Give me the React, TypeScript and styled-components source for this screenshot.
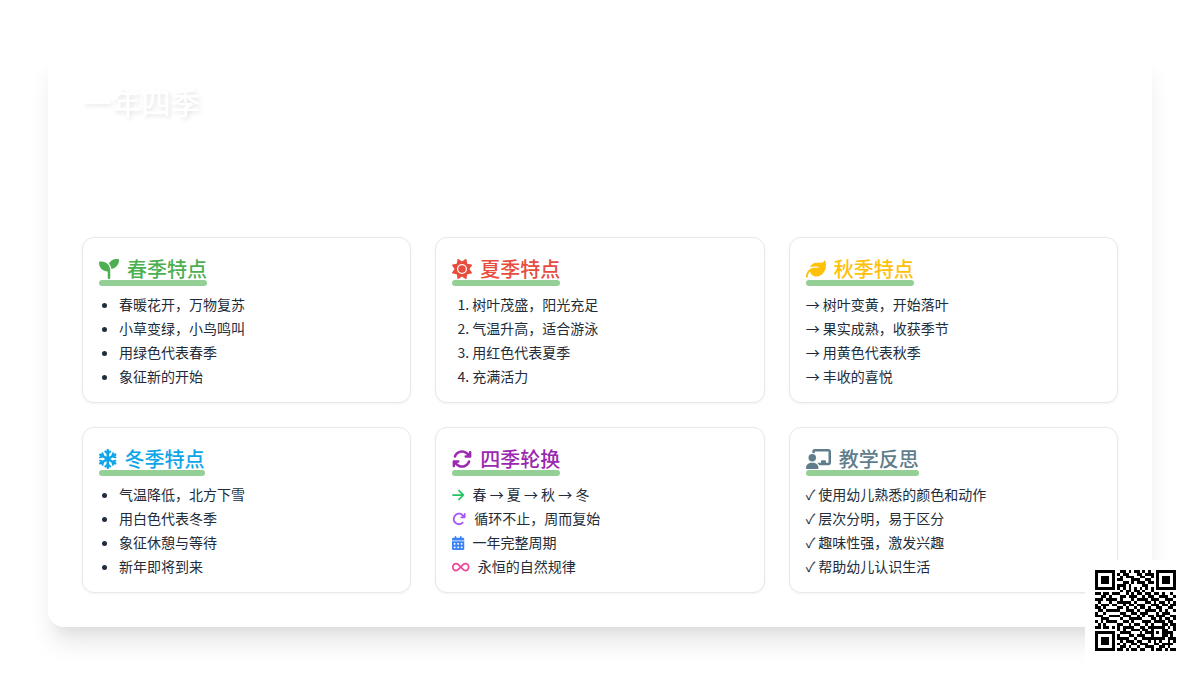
import React from 'react';
import styled, { createGlobalStyle } from 'styled-components';
import {
  FaSeedling,
  FaSun,
  FaLeaf,
  FaSnowflake,
  FaArrowsRotate,
  FaChalkboardUser,
  FaArrowRight,
  FaArrowRotateRight,
  FaCalendarDays,
  FaInfinity
} from 'react-icons/fa6';

const GlobalStyle = createGlobalStyle`
  html, body {
    margin: 0;
    padding: 0;
    background: #fff;
  }
  body {
    width: 1200px;
    height: 675px;
    overflow: hidden;
    font-family: "Noto Sans CJK SC", "Noto Sans", sans-serif;
  }
`;

const Page = styled.div`
  position: relative;
  box-sizing: border-box;
  width: 1200px;
  height: 675px;
  padding: 48px;
`;

const Slide = styled.div`
  box-sizing: border-box;
  height: 579px;
  padding: 34px;
  display: flex;
  flex-direction: column;
  justify-content: space-between;
  background: #fff;
  border-radius: 16px;
  box-shadow: 0 20px 25px -5px rgba(0, 0, 0, 0.1), 0 10px 10px -5px rgba(0, 0, 0, 0.04);
`;

const Title = styled.h1`
  margin: 0;
  font-size: 29.6px;
  line-height: 40px;
  font-weight: 500;
  color: #fff;
  text-shadow: 2px 2px 4px rgba(0, 0, 0, 0.1);
`;

const Grid = styled.div`
  display: grid;
  grid-template-columns: repeat(3, 1fr);
  gap: 24px;
`;

const Card = styled.section`
  box-sizing: border-box;
  height: 166px;
  padding: 16px;
  background: #fff;
  border: 1px solid #e8e8e8;
  border-radius: 12px;
  box-shadow: 0 1px 3px rgba(0, 0, 0, 0.05);
`;

const Heading = styled.h2<{ $color: string; $iconWidth?: number }>`
  position: relative;
  display: inline-flex;
  align-items: center;
  height: 32px;
  box-sizing: border-box;
  padding-bottom: 3px;
  margin: 0 0 6px;
  font-size: 20px;
  line-height: 28px;
  font-weight: 500;
  color: ${(p) => p.$color};
  vertical-align: top;

  svg {
    width: ${(p) => p.$iconWidth || 20}px;
    height: 20px;
    margin-right: 8px;
  }

  &::after {
    content: '';
    position: absolute;
    left: 0;
    right: 0;
    bottom: 0;
    height: 6px;
    border-radius: 3px;
    background: rgba(76, 175, 80, 0.6);
  }
`;

const Bullets = styled.ul`
  margin: 0;
  padding-left: 20px;
  font-size: 14px;
  line-height: 24px;
  color: #222c3a;
`;

const Numbers = styled.ol`
  margin: 0;
  padding-left: 20px;
  font-size: 14px;
  line-height: 24px;
  color: #222c3a;
`;

const Plain = styled.ul<{ $mark?: string }>`
  margin: 0;
  padding: 0;
  list-style: none;
  font-size: 14px;
  line-height: 24px;
  color: #222c3a;

  li::before {
    content: '${(p) => p.$mark || ''}';
  }
`;

const IconRow = styled.li<{ $color: string; $iconWidth: number }>`
  display: flex;
  align-items: center;

  svg {
    flex: none;
    width: ${(p) => p.$iconWidth}px;
    height: 14px;
    margin: 2px 8px 0 0;
    color: ${(p) => p.$color};
  }
`;

const QrBox = styled.div`
  position: absolute;
  right: 14px;
  bottom: 14px;
  padding: 10px;
  background: #fff;
  line-height: 0;
`;

const qrRows = [
  '11111110011010110101001111111',
  '10000010101100011011101000001',
  '10111010010111001100101011101',
  '10111010110001110011001011101',
  '10111010001101011101101011101',
  '10000010111010000110001000001',
  '11111110101010101010101111111',
  '00000000010110110100100000000',
  '11011011100101011011011010010',
  '00110100011011100101100111001',
  '11101111010001011110111001110',
  '01000100111110100011010110101',
  '10111011001011011100111011011',
  '11010000110100101101001100110',
  '01101111100111010011110101001',
  '10010000011001101110001011100',
  '11100111101110010101101110011',
  '00111000010011111000110101101',
  '10101111001101000111011110110',
  '01010000110010110010100011011',
  '11011010101111001101111110101',
  '00000000101001110110100011001',
  '11111110011110001011101011110',
  '10000010100011011100100011010',
  '10111010111100100111111110111',
  '10111010010111011001010100101',
  '10111010101001101110011011110',
  '10000010011010010011100110100',
  '11111110110101101100101101011'
];

function QrCode() {
  const d = qrRows
    .map((row, y) =>
      row
        .split('')
        .map((cell, x) => (cell === '1' ? `M${x} ${y}h1v1h-1z` : ''))
        .join('')
    )
    .join('');
  return (
    <svg width="81" height="81" viewBox="0 0 29 29" shapeRendering="crispEdges">
      <path d={d} fill="#000" />
    </svg>
  );
}

function App() {
  return (
    <Page>
      <GlobalStyle />
      <Slide>
        <Title>一年四季</Title>
        <Grid>
          <Card>
            <Heading $color="#4caf50">
              <FaSeedling />
              春季特点
            </Heading>
            <Bullets>
              <li>春暖花开，万物复苏</li>
              <li>小草变绿，小鸟鸣叫</li>
              <li>用绿色代表春季</li>
              <li>象征新的开始</li>
            </Bullets>
          </Card>
          <Card>
            <Heading $color="#e74c3c">
              <FaSun />
              夏季特点
            </Heading>
            <Numbers>
              <li>树叶茂盛，阳光充足</li>
              <li>气温升高，适合游泳</li>
              <li>用红色代表夏季</li>
              <li>充满活力</li>
            </Numbers>
          </Card>
          <Card>
            <Heading $color="#ffc107">
              <FaLeaf />
              秋季特点
            </Heading>
            <Plain $mark="→ ">
              <li>树叶变黄，开始落叶</li>
              <li>果实成熟，收获季节</li>
              <li>用黄色代表秋季</li>
              <li>丰收的喜悦</li>
            </Plain>
          </Card>
          <Card>
            <Heading $color="#0ea5e9" $iconWidth={17.5}>
              <FaSnowflake />
              冬季特点
            </Heading>
            <Bullets>
              <li>气温降低，北方下雪</li>
              <li>用白色代表冬季</li>
              <li>象征休憩与等待</li>
              <li>新年即将到来</li>
            </Bullets>
          </Card>
          <Card>
            <Heading $color="#9c27b0">
              <FaArrowsRotate />
              四季轮换
            </Heading>
            <Plain>
              <IconRow $color="#22c55e" $iconWidth={12.25}>
                <FaArrowRight />
                春 → 夏 → 秋 → 冬
              </IconRow>
              <IconRow $color="#a855f7" $iconWidth={14}>
                <FaArrowRotateRight />
                循环不止，周而复始
              </IconRow>
              <IconRow $color="#3b82f6" $iconWidth={12.25}>
                <FaCalendarDays />
                一年完整周期
              </IconRow>
              <IconRow $color="#ec4899" $iconWidth={17.5}>
                <FaInfinity />
                永恒的自然规律
              </IconRow>
            </Plain>
          </Card>
          <Card>
            <Heading $color="#607d8b" $iconWidth={25}>
              <FaChalkboardUser />
              教学反思
            </Heading>
            <Plain $mark="✓ ">
              <li>使用幼儿熟悉的颜色和动作</li>
              <li>层次分明，易于区分</li>
              <li>趣味性强，激发兴趣</li>
              <li>帮助幼儿认识生活</li>
            </Plain>
          </Card>
        </Grid>
      </Slide>
      <QrBox>
        <QrCode />
      </QrBox>
    </Page>
  );
}

export default App;
